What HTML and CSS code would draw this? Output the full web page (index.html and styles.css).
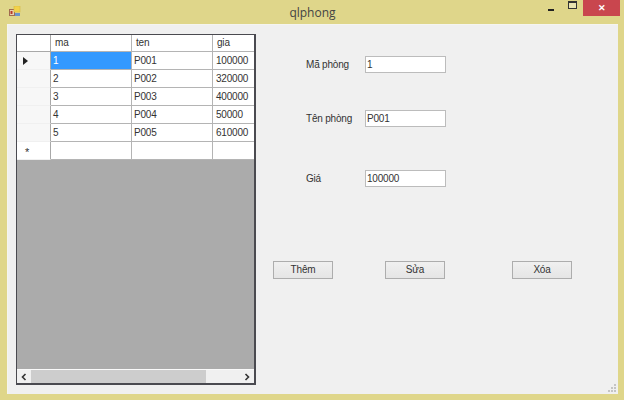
FILE: index.html
```html
<!DOCTYPE html>
<html lang="vi">
<head>
<meta charset="utf-8">
<title>qlphong</title>
<link rel="stylesheet" href="styles.css">
</head>
<body>
<div class="window">
  <header class="titlebar">
    <svg class="app-icon" width="12" height="11" viewBox="0 0 12 11">
      <rect x="0.5" y="3.5" width="5" height="6" fill="#e8d0b0" stroke="#a06a50"/>
      <rect x="1.5" y="5" width="2" height="3" fill="#b83a28"/>
      <rect x="5" y="0" width="6" height="6" fill="#f2d24a" stroke="#d8b840" stroke-width="0.6"/>
      <rect x="6" y="7" width="5" height="3" fill="#6d94c8"/>
    </svg>
    <span class="title">qlphong</span>
    <div class="controls">
      <span class="ctl c-min"><span class="min"></span></span>
      <span class="ctl c-max"><span class="max"></span></span>
      <span class="close">✕</span>
    </div>
  </header>
  <main class="client">
    <section class="grid">
      <div class="table">
        <div class="row head"><div class="rh"></div><div class="c ma">ma</div><div class="c ten">ten</div><div class="c gia">gia</div></div>
        <div class="row"><div class="rh"><span class="arrow"></span></div><div class="c ma sel">1</div><div class="c ten">P001</div><div class="c gia">100000</div></div>
        <div class="row"><div class="rh"></div><div class="c ma">2</div><div class="c ten">P002</div><div class="c gia">320000</div></div>
        <div class="row"><div class="rh"></div><div class="c ma">3</div><div class="c ten">P003</div><div class="c gia">400000</div></div>
        <div class="row"><div class="rh"></div><div class="c ma">4</div><div class="c ten">P004</div><div class="c gia">50000</div></div>
        <div class="row"><div class="rh"></div><div class="c ma">5</div><div class="c ten">P005</div><div class="c gia">610000</div></div>
        <div class="row new"><div class="rh star">*</div><div class="c ma"></div><div class="c ten"></div><div class="c gia"></div></div>
      </div>
      <div class="empty"></div>
      <div class="hscroll">
        <svg class="chev" width="14" height="14" viewBox="0 0 14 14"><path d="M8.5 4 L5.5 7 L8.5 10" fill="none" stroke="#333" stroke-width="1.6"/></svg>
        <div class="track"><div class="thumb"></div></div>
        <svg class="chev" width="14" height="14" viewBox="0 0 14 14"><path d="M5.5 4 L8.5 7 L5.5 10" fill="none" stroke="#333" stroke-width="1.6"/></svg>
      </div>
    </section>
    <section class="side">
      <div class="fields">
        <div class="field f1"><label>Mã phòng</label><div class="input">1</div></div>
        <div class="field f2"><label>Tên phòng</label><div class="input">P001</div></div>
        <div class="field f3"><label>Giá</label><div class="input">100000</div></div>
      </div>
      <div class="buttons">
        <div class="btn">Thêm</div>
        <div class="btn">Sửa</div>
        <div class="btn">Xóa</div>
      </div>
    </section>
    <svg class="grip" width="10" height="10" viewBox="0 0 10 10" fill="#c4c4c4">
      <rect x="7" y="1" width="2" height="2"/><rect x="4" y="4" width="2" height="2"/><rect x="7" y="4" width="2" height="2"/>
      <rect x="1" y="7" width="2" height="2"/><rect x="4" y="7" width="2" height="2"/><rect x="7" y="7" width="2" height="2"/>
    </svg>
  </main>
</div>
</body>
</html>
```

FILE: styles.css
```css
* { box-sizing: border-box; }
html, body { margin: 0; padding: 0; }
body {
  width: 624px;
  height: 400px;
  overflow: hidden;
  font-family: "Liberation Sans", Arial, sans-serif;
  font-size: 10px;
  letter-spacing: -0.2px;
  color: #333;
}
.window {
  width: 624px;
  height: 400px;
  background: #dfd68a;
  padding: 0 6px 6px 7px;
  display: flex;
  flex-direction: column;
}
.titlebar {
  height: 24px;
  flex: none;
  position: relative;
  display: flex;
  align-items: center;
  justify-content: center;
}
.app-icon { position: absolute; left: 2px; top: 6px; }
.title {
  font-family: "Open Sans", sans-serif;
  font-size: 12px;
  letter-spacing: 0;
  color: #444;
}
.controls {
  position: absolute;
  right: -2px;
  top: 0;
  display: flex;
  height: 16px;
}
.ctl {
  display: flex;
  align-items: center;
  justify-content: center;
}
.c-min { width: 22px; }
.c-max { width: 21px; }
.min { width: 6px; height: 2px; background: #222; margin-top: 4px; }
.max { width: 9px; height: 8px; border: 1px solid #333; border-top-width: 2px; margin-bottom: 7px; background: #e8e3b0; }
.close {
  width: 37px;
  background: #c9464e;
  color: #fff;
  font-size: 9px;
  font-weight: bold;
  line-height: 16px;
  text-align: center;
}
.client {
  flex: 1;
  background: #f0f0f0;
  position: relative;
  display: flex;
  padding: 9px 0 0 8px;
  border-left: 1px solid #f5f5f0;
  border-top: 1px solid #f5f5f0;
}
.grid {
  width: 240px;
  height: 351px;
  border: 1px solid #4a4a50;
  border-right-width: 2px;
  border-bottom-width: 2px;
  display: flex;
  flex-direction: column;
  background: #ababab;
  flex: none;
}
.table { flex: none; background: #fff; }
.row { display: flex; height: 18px; }
.row.head { height: 17px; }
.rh {
  width: 34px;
  flex: none;
  background: #f7f7f7;
  border-right: 1px solid #a8a8a8;
  border-bottom: 1px solid #f0f0f0;
  display: flex;
  align-items: center;
  padding-left: 6px;
}
.head .rh { background: #fff; border-bottom: 1px solid #a8a8a8; }
.c {
  border-right: 1px solid #b4b4b4;
  border-bottom: 1px solid #b4b4b4;
  padding: 0 0 0 2px;
  line-height: 17px;
  white-space: nowrap;
  overflow: hidden;
  background: #fff;
}
.ma { width: 81px; flex: none; }
.ten { width: 81px; flex: none; }
.gia { flex: 1; border-right: 0; padding-left: 3px; }
.head .c { padding-left: 4px; line-height: 16px; }
.sel { background: #3399ff; color: #fff; }
.arrow {
  width: 0; height: 0;
  border-left: 5px solid #222;
  border-top: 4px solid transparent;
  border-bottom: 4px solid transparent;
}
.star { padding-left: 8px; padding-top: 3px; font-size: 11px; background: #fff; }
.empty { flex: 1; }
.hscroll {
  height: 14px;
  flex: none;
  display: flex;
  background: #f0f0f0;
  border-top: 1px solid #fafafa;
}
.chev { flex: none; }
.track { flex: 1; background: #f0f0f0; }
.thumb { width: 175px; height: 100%; background: #cdcdcd; }
.side {
  flex: 1;
  display: flex;
  flex-direction: column;
  padding-top: 22px;
}
.fields { display: flex; flex-direction: column; }
.field { display: flex; align-items: center; height: 17px; padding-left: 50px; }
.field label { width: 59px; flex: none; }
.f2 { margin-top: 37px; }
.f3 { margin-top: 43px; }
.input {
  width: 81px;
  height: 17px;
  border: 1px solid #bcbcbc;
  background: #fff;
  padding-left: 1px;
  line-height: 15px;
}
.buttons {
  display: flex;
  margin-top: 74px;
  padding-left: 17px;
}
.btn {
  width: 60px;
  height: 18px;
  border: 1px solid #adadad;
  background: linear-gradient(#f0f0f0, #e5e5e5);
  text-align: center;
  line-height: 16px;
}
.btn:nth-child(2) { margin-left: 52px; }
.btn:nth-child(3) { margin-left: 67px; }
.grip { position: absolute; right: 1px; bottom: 1px; }
```
